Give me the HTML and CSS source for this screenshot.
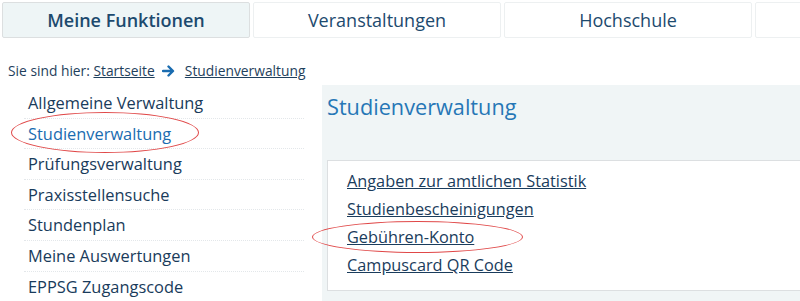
FILE: index.html
```html
<!DOCTYPE html>
<html lang="de">
<head>
  <meta charset="UTF-8">
  <title>Studienverwaltung</title>
  <link rel="stylesheet" href="styles.css">
</head>
<body>
  <nav class="tabs">
    <a class="tab active" href="#">Meine Funktionen</a>
    <a class="tab" href="#">Veranstaltungen</a>
    <a class="tab" href="#">Hochschule</a>
    <a class="tab" href="#"></a>
  </nav>

  <div class="crumbs">
    Sie sind hier: <a href="#">Startseite</a>
    <svg class="arrow" width="14" height="12" viewBox="0 0 14 12"><path d="M1 6h9M6.5 1.5L11 6l-4.5 4.5" fill="none" stroke="#1a6cb0" stroke-width="2.4" stroke-linecap="round" stroke-linejoin="round"/></svg>
    <a href="#">Studienverwaltung</a>
  </div>

  <div class="main">
    <ul class="side">
      <li><a href="#">Allgemeine Verwaltung</a></li>
      <li class="current"><a href="#">Studienverwaltung</a></li>
      <li><a href="#">Prüfungsverwaltung</a></li>
      <li><a href="#">Praxisstellensuche</a></li>
      <li><a href="#">Stundenplan</a></li>
      <li><a href="#">Meine Auswertungen</a></li>
      <li><a href="#">EPPSG Zugangscode</a></li>
    </ul>

    <section class="panel">
      <h1>Studienverwaltung</h1>
      <ul class="links">
        <li><a href="#">Angaben zur amtlichen Statistik</a></li>
        <li><a href="#">Studienbescheinigungen</a></li>
        <li><a href="#">Gebühren-Konto</a></li>
        <li><a href="#">Campuscard QR Code</a></li>
      </ul>
    </section>
  </div>

  <!-- markings -->
  <div class="mark mark-nav"></div>
  <div class="mark mark-fee"></div>
</body>
</html>
```

FILE: styles.css
```css
body {
  margin: 0;
  font-family: "Open Sans", "DejaVu Sans", sans-serif;
  color: #1b3d5c;
  background: #fff;
  overflow: hidden;
  position: relative;
  height: 301px;
}
a {
  color: inherit;
}
.tabs {
  display: flex;
  gap: 3px;
  padding: 2px 0 0 2px;
}
.tab {
  flex: 0 0 248px;
  box-sizing: border-box;
  height: 36px;
  line-height: 34px;
  text-align: center;
  text-decoration: none;
  font-size: 18px;
  color: #1d4a6e;
  border: 1px solid #edf0f1;
  border-radius: 2px;
  background: #fff;
}
.tab.active {
  background: #eef5f6;
  border-color: #dcdfe0;
  font-weight: 600;
}
.crumbs {
  margin: 24px 0 0 8px;
  font-size: 13.8px;
  line-height: 18px;
  color: #1f3f5c;
}
.crumbs a {
  color: #1f3f5c;
}
.arrow {
  margin: 0 5px 0 4px;
  vertical-align: -1px;
}
.main {
  display: flex;
  margin-top: 5px;
}
.side {
  list-style: none;
  margin: 3px 0 0 24px;
  padding: 0;
  width: 280px;
  flex: 0 0 280px;
}
.side li {
  border-bottom: 1px dotted #e3e7ea;
  padding: 4px 4px;
  line-height: 21.6px;
  font-size: 16.4px;
}
.side li:last-child {
  border-bottom: none;
}
.side a {
  text-decoration: none;
  color: #193b5b;
}
.side .current a {
  color: #1a6cb0;
}
.panel {
  margin-left: 18px;
  flex: 1;
  background: #f0f5f6;
  padding: 8px 0 0 5px;
  height: 208px;
}
.panel h1 {
  margin: 0;
  font-size: 21.7px;
  font-weight: normal;
  line-height: 28px;
  color: #2677b6;
}
.links {
  list-style: none;
  margin: 39px 0 0 0;
  padding: 6px 0 11px 19px;
  background: #fff;
  border: 1px solid #dcdfe1;
  border-right: none;
}
.links li {
  line-height: 28px;
  font-size: 16.3px;
}
.links a {
  color: #1a3c5c;
}
.mark {
  position: absolute;
  border: 1px solid #e04848;
  border-radius: 50%;
}
.mark-nav {
  left: 11px;
  top: 112px;
  width: 186px;
  height: 39px;
}
.mark-fee {
  left: 312px;
  top: 221px;
  width: 209px;
  height: 30px;
}
```
